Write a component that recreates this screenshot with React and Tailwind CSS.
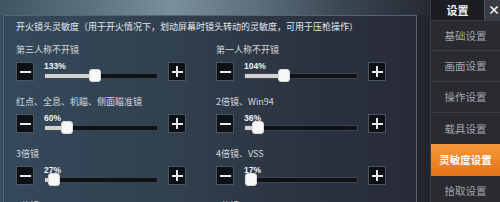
import React from "react";

const FONT = { fontFamily: '"Noto Sans CJK SC", "Noto Sans", sans-serif' };

function Btn({ plus }) {
  return (
    <div className="w-[18px] h-[19px] bg-[#0d1014] border border-[#4b5663] flex items-center justify-center relative shrink-0">
      <div className="absolute w-[11px] h-[2px] bg-[#e8eaec]" />
      {plus && <div className="absolute w-[2px] h-[11px] bg-[#e8eaec]" />}
    </div>
  );
}

function Slider({ value }) {
  const pct = Math.min(1, value / 300);
  const trackW = 114;
  const thumbW = 12;
  const center = Math.max(thumbW / 2 + 1, pct * trackW);
  return (
    <div className="relative w-[114px] h-[19px] shrink-0">
      <div className="absolute left-0 top-0 text-[8.5px] leading-[9px] font-bold text-[#f2f3f4]" style={{ fontFamily: '"Liberation Sans", Arial, sans-serif' }}>
        {value}%
      </div>
      <div className="absolute left-0 top-[11px] w-[114px] h-[6px] bg-[#0e1115] border border-[#3c4550]">
        <div className="absolute left-0 top-0 h-full bg-[#cfd1d3]" style={{ width: center }} />
      </div>
      <div
        className="absolute top-[7px] w-[12px] h-[13px] bg-[#f7f7f7] rounded-[3px] border border-[#d8d8d8]"
        style={{ left: center - thumbW / 2 }}
      />
    </div>
  );
}

function Control({ label, value }) {
  return (
    <div className="w-[206px] flex flex-col">
      <div className="h-[12px] leading-[12px] text-[9px] text-[#d3d8dd] whitespace-nowrap">{label}</div>
      <div className="mt-[6px] flex items-start">
        <Btn />
        <div className="ml-[10px]">
          <Slider value={value} />
        </div>
        <div className="ml-[10px]">
          <Btn plus />
        </div>
      </div>
    </div>
  );
}

const rows = [
  [
    ["第三人称不开镜", 133],
    ["第一人称不开镜", 104],
  ],
  [
    ["红点、全息、机瞄、侧面瞄准镜", 60],
    ["2倍镜、Win94", 36],
  ],
  [
    ["3倍镜", 27],
    ["4倍镜、VSS", 17],
  ],
  [
    ["6倍镜", 20],
    ["8倍镜", 15],
  ],
];

const menu = ["基础设置", "画面设置", "操作设置", "载具设置", "灵敏度设置", "拾取设置"];

export default function App() {
  return (
    <div
      className="w-[500px] h-[202px] overflow-hidden flex bg-[#3a5062]"
      style={FONT}
    >
      <div className="w-[430px] h-full flex flex-col bg-[#22252e]">
        <div className="h-[15px] shrink-0 bg-[linear-gradient(90deg,#3f5563_0%,#5a707c_20%,#7a909c_40%,#5b6e7a_60%,#3a4652_80%,#262a33_100%)]" />
        <div className="flex-1 flex bg-[linear-gradient(90deg,#3b5366_0%,#36495b_3px,#22252e_3px)]">
          <div className="ml-[3px] w-[414px] h-[260px] border-t border-l border-r border-[#56646f] bg-[linear-gradient(90deg,#34495b_0%,#31404f_40%,#2b323f_75%,#272b37_100%)] pl-[12px] pt-[5px]">
            <div className="h-[12px] leading-[12px] text-[9px] text-[#e4e8eb] whitespace-nowrap">
              开火镜头灵敏度（用于开火情况下，划动屏幕时镜头转动的灵敏度，可用于压枪操作）
            </div>
            <div className="mt-[11px] flex flex-col gap-[15px]">
              {rows.map((r, i) => (
                <div key={i} className="flex">
                  <Control label={r[0][0]} value={r[0][1]} />
                  <Control label={r[1][0]} value={r[1][1]} />
                </div>
              ))}
            </div>
          </div>
        </div>
      </div>
      <div className="w-[70px] h-full flex flex-col bg-[#2a2a31] border-l border-[#3a3b45]">
        <div className="h-[20px] flex shrink-0">
          <div className="w-[57px] bg-[#1b1d22] flex items-center justify-center text-[11px] font-bold text-[#f0f0f0]">设置</div>
          <div className="flex-1 bg-[#3a3c44] border-l border-[#55565e] flex items-center pl-[3px] text-[12px] font-bold text-white">×</div>
        </div>
        {menu.map((m, i) =>
          m === "灵敏度设置" ? (
            <div
              key={m}
              className="h-[32px] shrink-0 bg-[linear-gradient(180deg,#f39a3a_0%,#ec8224_60%,#e37219_100%)] flex items-center justify-center text-[10.5px] font-bold text-white"
            >
              {m}
            </div>
          ) : (
            <div
              key={m}
              className={`h-[31px] shrink-0 flex items-center justify-center text-[10.5px] text-[#a4a6ad] ${i === 0 ? "border-t border-[#3c3d47]" : ""} ${menu[i + 1] !== "灵敏度设置" ? "border-b border-[#3c3d47]" : ""}`}
            >
              {m}
            </div>
          )
        )}
      </div>
    </div>
  );
}
